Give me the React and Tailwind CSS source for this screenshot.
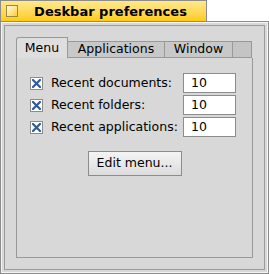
import { useState } from 'react';

const rows = [
  { id: 'docs', label: 'Recent documents:', value: '10' },
  { id: 'folders', label: 'Recent folders:', value: '10' },
  { id: 'apps', label: 'Recent applications:', value: '10' },
];

const CheckMark = () => (
  <svg width="9" height="9" viewBox="0 0 9 9">
    <path d="M1 1 L8 8 M8 1 L1 8" stroke="#2e5b9a" strokeWidth="2.2" strokeLinecap="square" />
  </svg>
);

const App = () => {
  const [checked, setChecked] = useState({ docs: true, folders: true, apps: true });

  return (
    <div
      className="w-[269px] h-[274px] bg-white flex flex-col overflow-hidden"
      style={{ fontFamily: '"DejaVu Sans", "Liberation Sans", sans-serif' }}
    >
      {/* Title tab */}
      <div className="w-[207px] h-[21px] border border-[#8c8c8c] border-b-0 bg-gradient-to-b from-[#ffe98a] to-[#ffcb00] flex items-center">
        <div className="ml-[5px] w-[12px] h-[12px] border border-[#9a8a40] bg-gradient-to-br from-[#fffbe0] to-[#ffcb00]" />
        <span className="flex-1 text-center text-[13px] font-bold text-black leading-none pr-[3px]">
          Deskbar preferences
        </span>
      </div>

      {/* Window frame */}
      <div className="flex-1 border border-[#8c8c8c] flex">
        <div className="flex-1 border border-[#f4f4f4] flex">
          <div className="flex-1 border-2 border-[#d8d8d8] flex">
            <div className="flex-1 border border-[#9c9c9c] bg-[#d8d8d8] p-[11px] flex flex-col">
              {/* Tab strip */}
              <div className="flex items-end h-[21px]">
                <div className="h-[21px] w-[52px] border border-b-0 border-[#999] rounded-tl-[3px] bg-[#dedede] flex items-center justify-center text-[12.5px] text-black">
                  Menu
                </div>
                <div className="h-[17px] w-[97px] border border-l-0 border-[#999] bg-[#c8c8c8] flex items-center justify-center text-[12.5px] text-black">
                  Applications
                </div>
                <div className="h-[17px] w-[68px] border border-l-0 border-[#999] bg-[#c8c8c8] flex items-center justify-center text-[12.5px] text-black">
                  Window
                </div>
                <div className="h-[17px] flex-1 mr-[1px] border border-l-0 border-[#999] bg-[#c4c4c4]" />
              </div>

              {/* Tab body */}
              <div className="flex-1 border border-t-0 border-[#999] bg-[#d8d8d8] flex flex-col pt-[15px] pl-[13px]">
                <div className="flex flex-col gap-[2px]">
                  {rows.map((row) => (
                    <div key={row.id} className="flex items-center h-[20px]">
                      <button
                        onClick={() => setChecked({ ...checked, [row.id]: !checked[row.id] })}
                        className="w-[13px] h-[13px] border border-[#8c8c8c] bg-white flex items-center justify-center"
                      >
                        {checked[row.id] && <CheckMark />}
                      </button>
                      <span className="ml-[8px] w-[132px] text-[12.5px] text-black whitespace-nowrap">{row.label}</span>
                      <div className="w-[53px] h-[20px] border border-[#8c8c8c] bg-white flex items-center pl-[7px] text-[12.5px] text-black">
                        {row.value}
                      </div>
                    </div>
                  ))}
                </div>
                <div className="flex justify-center mt-[14px] pr-[13px]">
                  <button className="w-[94px] h-[25px] border border-[#8c8c8c] bg-gradient-to-b from-[#f4f4f4] to-[#dcdcdc] text-[12.5px] text-black">
                    Edit menu...
                  </button>
                </div>
              </div>
            </div>
          </div>
        </div>
      </div>
    </div>
  );
};

export default App;
